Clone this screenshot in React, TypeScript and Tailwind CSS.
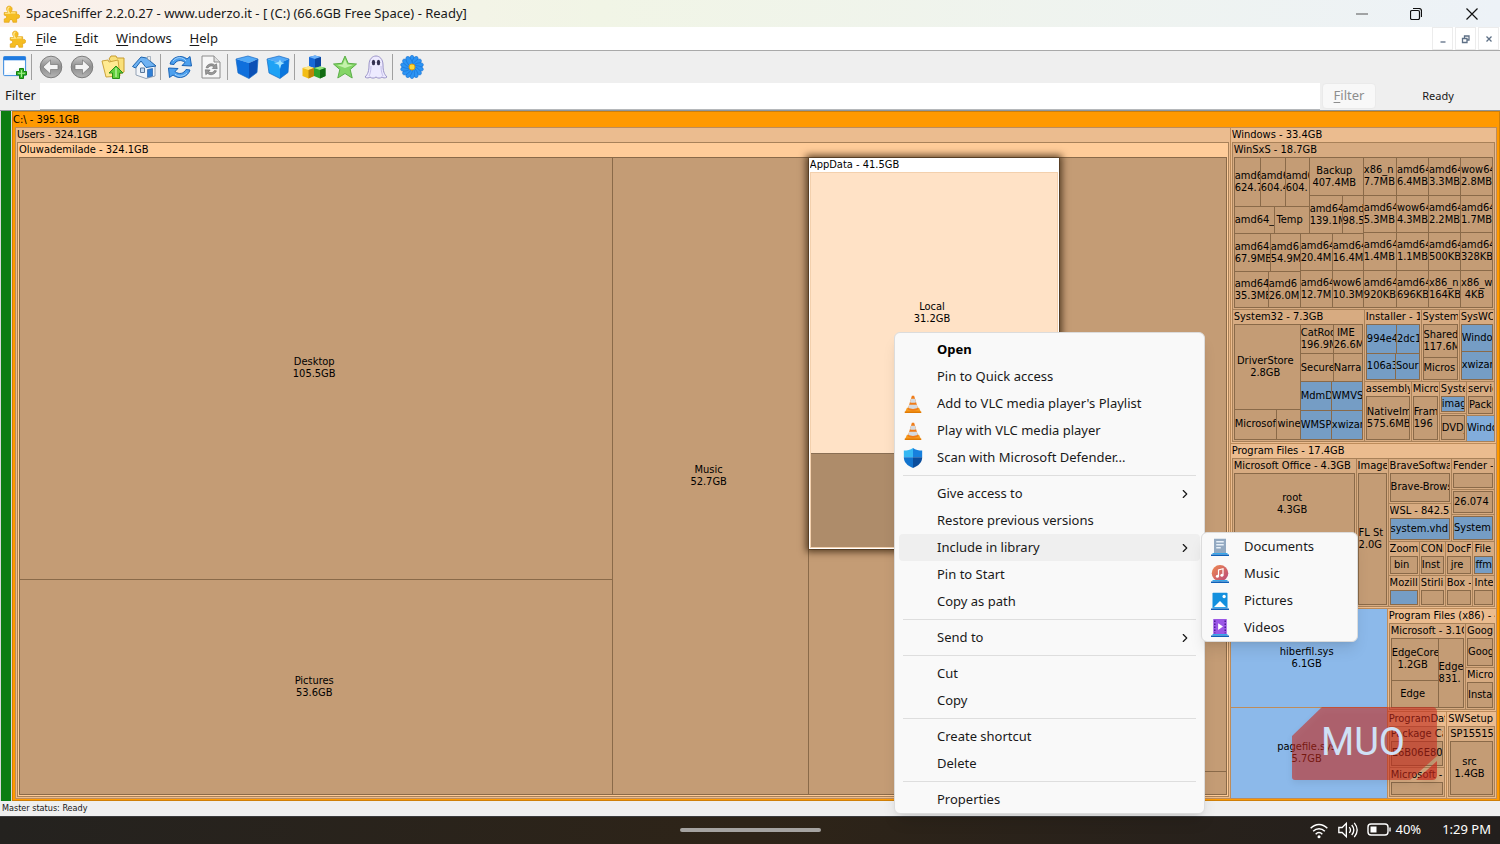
import type { ReactNode } from 'react'
import clsx from 'clsx'
import { ChevronRight } from 'lucide-react'

type Tone = 'file' | 'blue1' | 'blue2' | 'blue3' | 'local' | 'shade'
type Fill = 'root' | 'folder1' | 'folder2' | 'open' | 'hover'

type Node =
  | { kind: 'leaf'; w: number; name?: string; size?: string; tone: Tone }
  | { kind: 'split'; w: number; dir: 'row' | 'col'; items: Node[] }
  | { kind: 'group'; w: number; title: string; fill: Fill; body: Node }

const tones: Record<Tone, string> = {
  file: 'bg-[#c49c75]',
  blue1: 'bg-[#8cb9ea]',
  blue2: 'bg-[#82addb]',
  blue3: 'bg-[#759dc5]',
  local: 'bg-[#ffe2c6]',
  shade: 'bg-[#ae8c6a]',
}

const fills: Record<Fill, string> = {
  root: 'bg-[#ff9900]',
  folder1: 'bg-[#ebbc8f]',
  folder2: 'bg-[#d7ab81]',
  open: 'bg-[#ffcc99]',
  hover: 'bg-white z-10 shadow-[0_0_7px_3px_rgba(50,30,10,0.75)]',
}

const lines: Record<Fill, string> = {
  root: 'border-[#bd8c5b] bg-[#bd8c5b]',
  folder1: 'border-[#a88159] bg-[#a88159]',
  folder2: 'border-[#8a6a49] bg-[#8a6a49]',
  open: 'border-[#8a6a49] bg-[#8a6a49]',
  hover: 'border-[#f3d0ad] bg-[#8a6f54]',
}

const leaf = (w: number, name?: string, size?: string, tone: Tone = 'file'): Node => ({ kind: 'leaf', w, name, size, tone })
const blue = (w: number, name?: string): Node => leaf(w, name, undefined, 'blue3')
const row = (w: number, ...items: Node[]): Node => ({ kind: 'split', w, dir: 'row', items })
const col = (w: number, ...items: Node[]): Node => ({ kind: 'split', w, dir: 'col', items })
const group = (w: number, title: string, body: Node, fill: Fill = 'folder2'): Node => ({ kind: 'group', w, title, fill, body })

const users = group(
  1215,
  'Users - 324.1GB',
  group(
    1,
    'Oluwademilade - 324.1GB',
    row(
      1,
      col(594, leaf(422, 'Desktop', '105.5GB'), leaf(215, 'Pictures', '53.6GB')),
      leaf(195, 'Music', '52.7GB'),
      col(
        251,
        group(392, 'AppData - 41.5GB', col(1, leaf(281, 'Local', '31.2GB', 'local'), leaf(94, '', '', 'shade')), 'hover'),
        leaf(245),
      ),
      col(166, leaf(615), leaf(22)),
    ),
    'open',
  ),
  'folder1',
)

const winSxS = group(
  167,
  'WinSxS - 18.7GB',
  row(
    1,
    col(
      129,
      row(
        76,
        col(
          75,
          row(49, leaf(26, 'amd6', '624.7'), leaf(25, 'amd6', '604.4'), leaf(24, 'amd6', '604.')),
          row(27, leaf(40, 'amd64_'), leaf(35, 'Temp')),
        ),
        col(54, leaf(38, 'Backup', '407.4MB'), row(38, leaf(33, 'amd64', '139.1M'), leaf(21, 'amd', '98.5'))),
      ),
      row(
        74,
        col(
          66,
          row(38, leaf(36, 'amd64', '67.9MB'), leaf(30, 'amd6', '54.9M')),
          row(36, leaf(34, 'amd64', '35.3MB'), leaf(32, 'amd6', '26.0M')),
        ),
        col(
          63,
          row(37, leaf(32, 'amd64', '20.4M'), leaf(31, 'amd64', '16.4M')),
          row(37, leaf(32, 'amd64', '12.7M'), leaf(31, 'wow6', '10.3M')),
        ),
      ),
    ),
    col(
      129,
      row(1, leaf(33, 'x86_n', '7.7MB'), leaf(32, 'amd64', '6.4MB'), leaf(32, 'amd64', '3.3MB'), leaf(32, 'wow64', '2.8MB')),
      row(1, leaf(33, 'amd64', '5.3MB'), leaf(32, 'wow64', '4.3MB'), leaf(32, 'amd64', '2.2MB'), leaf(32, 'amd64', '1.7MB')),
      row(1, leaf(33, 'amd64', '1.4MB'), leaf(32, 'amd64', '1.1MB'), leaf(32, 'amd64', '500KB'), leaf(32, 'amd64', '328KB')),
      row(1, leaf(33, 'amd64', '920KB'), leaf(32, 'amd64', '696KB'), leaf(32, 'x86_n', '164KB'), leaf(32, 'x86_w', '4KB')),
    ),
  ),
)

const system32 = group(
  131,
  'System32 - 7.3GB',
  row(
    1,
    col(66, leaf(85, 'DriverStore', '2.8GB'), row(29, leaf(43, 'Microsof'), leaf(23, 'wine'))),
    col(
      62,
      row(29, leaf(33, 'CatRoo', '196.9M'), leaf(29, 'IME', '26.6M')),
      row(28, leaf(33, 'Secure'), leaf(29, 'Narra')),
      row(28, blue(31, 'MdmD'), blue(31, 'WMVS')),
      row(29, blue(31, 'WMSP'), blue(31, 'xwizar')),
    ),
  ),
)

const windows = group(
  316,
  'Windows - 33.4GB',
  col(
    1,
    winSxS,
    row(
      132,
      system32,
      col(
        131,
        row(
          72,
          group(58, 'Installer - 1.', col(1, row(28, blue(31, '994e4'), blue(23, '2dc1')), row(25, blue(30, '106a3'), blue(24, 'Sour')))),
          group(38, 'System', col(1, leaf(32, 'Shared', '117.6M'), leaf(21, 'Micros'))),
          group(35, 'SysWO', col(1, blue(26, 'Windo'), blue(27, 'xwizar'))),
        ),
        row(
          60,
          group(47, 'assembly', leaf(1, 'NativeIm', '575.6MB')),
          group(27, 'Micro', leaf(1, 'Fram', '196')),
          col(28, group(33, 'Syste', blue(1, 'imag')), group(26, '', leaf(1, 'DVD_'))),
          col(29, group(33, 'servic', leaf(1, 'Pack')), leaf(26, 'Windo', undefined, 'blue2')),
        ),
      ),
    ),
  ),
  'folder1',
)

const programFiles = group(
  165,
  'Program Files - 17.4GB',
  row(
    1,
    group(125, 'Microsoft Office - 4.3GB', col(1, leaf(60, 'root', '4.3GB'), leaf(70))),
    group(30, 'Image', leaf(1, 'FL St', '2.0G')),
    col(
      109,
      row(
        83,
        col(64, group(45, 'BraveSoftwar', leaf(1, 'Brave-Brows')), group(38, 'WSL - 842.5M', blue(1, 'system.vhd'))),
        col(43, group(32, 'Fender -', leaf(1)), group(25, '', leaf(1, '26.074')), group(26, '', blue(1, 'System'))),
      ),
      row(
        33,
        group(32, 'Zoom', leaf(1, 'bin')),
        group(26, 'CONE', leaf(1, 'Inst')),
        group(28, 'DocF', leaf(1, 'jre')),
        group(21, 'File C', blue(1, 'ffm')),
      ),
      row(
        31,
        group(32, 'Mozilla', blue(1)),
        group(26, 'Stirlin', leaf(1)),
        group(28, 'Box -', leaf(1)),
        group(21, 'Inte', leaf(1)),
      ),
    ),
  ),
  'folder1',
)

const programFilesX86 = group(
  102,
  'Program Files (x86) - 4',
  row(
    1,
    group(76, 'Microsoft - 3.1G', row(1, col(47, leaf(40, 'EdgeCore', '1.2GB'), leaf(26, 'Edge')), leaf(25, 'Edge', '831.'))),
    col(29, group(43, 'Googl', leaf(1, 'Goog')), group(40, 'Micros', leaf(1, 'Insta'))),
  ),
  'folder1',
)

const programData = group(
  59,
  'ProgramDat',
  col(1, group(42, 'Package Ca', leaf(1, 'E6B06E80')), group(29, 'Microsoft -', leaf(1))),
  'folder1',
)

const tree = row(
  1,
  users,
  col(
    266,
    windows,
    programFiles,
    row(
      190,
      col(157, leaf(99, 'hiberfil.sys', '6.1GB', 'blue1'), leaf(91, 'pagefile.sys', '5.7GB', 'blue1')),
      col(
        109,
        programFilesX86,
        row(88, programData, group(49, 'SWSetup', group(1, 'SP15515', leaf(1, 'src', '1.4GB')), 'folder1')),
      ),
    ),
  ),
)

function TreeNode({ node }: { node: Node }) {
  const style = { flexGrow: node.w }

  if (node.kind === 'leaf') {
    return (
      <div
        style={style}
        className={clsx('flex min-h-0 min-w-0 basis-0 flex-col justify-center items-center-safe overflow-hidden whitespace-nowrap', tones[node.tone])}
      >
        {node.name && <span className="pr-1">{node.name}</span>}
        {node.size && <span className="pr-1">{node.size}</span>}
      </div>
    )
  }

  if (node.kind === 'split') {
    return (
      <div style={style} className={clsx('flex min-h-0 min-w-0 basis-0 gap-px', node.dir === 'col' && 'flex-col')}>
        {node.items.map((item, i) => (
          <TreeNode key={i} node={item} />
        ))}
      </div>
    )
  }

  return (
    <div style={style} className={clsx('flex min-h-0 min-w-0 basis-0 flex-col px-px pb-px', fills[node.fill], !node.title && 'pt-px')}>
      {node.title && <div className="h-[14px] shrink-0 overflow-hidden whitespace-nowrap leading-[14px]">{node.title}</div>}
      <div className={clsx('flex min-h-0 flex-1 border', lines[node.fill])}>
        <TreeNode node={node.body} />
      </div>
    </div>
  )
}

function Svg({ children, className = 'size-6' }: { children: ReactNode; className?: string }) {
  return (
    <svg viewBox="0 0 24 24" className={className} fill="none" aria-hidden="true">
      {children}
    </svg>
  )
}

const Puzzle = () => (
  <Svg className="size-[18px]">
    <path
      d="M3 10h5.500C5.500 7 5 1.500 9.500 1.500S14.500 6.500 12 9h7.500v4c1.500-1 4-.5 4 2s-2 3.500-4 2.500V23h-5c0-2.500-1-3.500-2.500-3.500S9.500 20.500 9.500 23H3v-4.500c2 0 3-1 3-2.500s-1-2.500-3-2.500z"
      fill="#f5bd22"
      stroke="#e3a416"
    />
    <path d="M4 11h6c-3-3-3-8 0-8M12 10.500h6" stroke="#ffe995" strokeWidth="1.600" />
  </Svg>
)

const NewView = () => (
  <Svg>
    <rect x="0.600" y="1.600" width="22" height="19" rx="1" fill="#f2f8ff" stroke="#3f8fe0" />
    <path d="M0.600 1.600h22v3.600h-22z" fill="#1f7ae0" />
    <path d="M2 6h19.500v5L2 19z" fill="#fff" />
    <path d="M16.500 13.500h4v3h3v3.500h-3v3.500h-4V20h-3v-3.500h3z" fill="#35b52a" stroke="#15800f" />
    <path d="M18.500 15v7M15 18.300h7" stroke="#a5ee8c" />
  </Svg>
)

const Arrow = ({ flip }: { flip?: boolean }) => (
  <Svg className={clsx('size-6', flip && '-scale-x-100')}>
    <defs>
      <linearGradient id="nav" x1="0" y1="0" x2="0" y2="1">
        <stop stopColor="#c9c9c9" />
        <stop offset=".5" stopColor="#8e8e8e" />
        <stop offset="1" stopColor="#b5b5b5" />
      </linearGradient>
    </defs>
    <circle cx="12" cy="12" r="10.800" fill="url(#nav)" stroke="#7d7d7d" />
    <path d="M4 12l7.500-7v4.500H19v5h-7.500V19z" fill="#f4f4f4" stroke="#777" strokeWidth=".7" />
  </Svg>
)

const FolderUp = () => (
  <Svg>
    <path d="M8 4l2-3h5l1 2h7v14l-5 2z" fill="#f9e07a" stroke="#c69b2e" />
    <path d="M1 6l6-1 1 2 9-2 2 16-14 1z" fill="#ffea92" stroke="#cba33b" />
    <path d="M15 11l7 7h-3.500v5.500h-7V18H8z" fill="#62cf3c" stroke="#2c8d1c" />
    <path d="M15 13v9" stroke="#b5f09a" strokeWidth="1.500" />
  </Svg>
)

const Home = () => (
  <Svg>
    <path d="M4 11l6-6 13 5v11l-9 2.500L4 20z" fill="#f2f5f9" stroke="#93a2b5" />
    <path d="M.500 11.500L9 2l5.500 1L24 11l-10 1.500L9 6l-5.500 7z" fill="#6fb2f2" stroke="#1d64ad" />
    <path d="M15.500 14.500l5-1V21l-5 1.300z" fill="#2f7fd6" stroke="#1a58a3" strokeWidth=".6" />
    <path d="M8.500 13h4v4.500h-4z" fill="#c7dcf2" stroke="#59779a" />
    <path d="M15.500 1.500h3V6l-3-2z" fill="#e5ebf2" stroke="#7c8ea3" strokeWidth=".6" />
  </Svg>
)

const RefreshShape = ({ fill, stroke }: { fill: string; stroke: string }) => (
  <g fill={fill} stroke={stroke}>
    <path d="M2 9C4 2 13-1 19 4l3-2.500L23.500 11l-9.500-.5L17 7.500C13 4 8 5.500 6 9.500z" />
    <path d="M22 15c-2 7-11 10-17 5l-3.500 2.500L.500 13l9.500.5L7 16.500c4 3.500 9 2 11-2z" />
  </g>
)

const Refresh = () => (
  <Svg>
    <RefreshShape fill="#4da0ee" stroke="#1862b5" />
    <path d="M5 6c4-5 10-4 13 0M19 18c-4 4-9 4-12 1" stroke="#a9d6fb" />
  </Svg>
)

const RefreshPage = () => (
  <Svg>
    <path d="M3 1h12l6 6v16H3z" fill="#f7f7f7" stroke="#8c8c8c" />
    <path d="M15 1v6h6" fill="#ddd" stroke="#8c8c8c" />
    <g transform="translate(6 8) scale(.52)">
      <RefreshShape fill="#999" stroke="#5c5c5c" />
    </g>
  </Svg>
)

const Cube = ({ lit }: { lit?: boolean }) => (
  <Svg>
    <path d="M1 4l12-3 10 3-9 4z" fill="#52aaf8" />
    <path d="M1 4l13 4v15.500L3 18z" fill={lit ? '#1fa2f5' : '#0f6fdc'} />
    <path d="M23 4l-9 4v15.500l8-6z" fill={lit ? '#0a76dd' : '#0b50b6'} />
    {lit && <path d="M14 4.500l1.200 2.500 3.300 1-3.300 1.700L14 14l-1.400-4.300L8 8l4.500-1z" fill="#9fe2ff" />}
    <path d="M1 4l12-3 10 3-1 13.500-8 6L3 18z" stroke="#1569c4" strokeWidth=".7" />
  </Svg>
)

const Blocks = () => (
  <Svg>
    <path d="M7 2l6-1.500L19 2v9l-6 2.500L7 11z" fill="#1769d6" />
    <path d="M7 2l6-1.500L19 2l-6 2z" fill="#70b4fa" />
    <path d="M13 4l6-2v9l-6 2.500z" fill="#0b459f" />
    <path d="M.500 13l6-1.500L12 13v8l-5.500 2.500L.500 21z" fill="#f3bd16" />
    <path d="M.500 13l6-1.500L12 13l-5.500 2z" fill="#ffe883" />
    <path d="M6.500 15l5.500-2v8l-5.500 2.500z" fill="#bd8508" />
    <path d="M12 13l6-1.500 5.500 1.500v8L18 23.500 12 21z" fill="#2fa22a" />
    <path d="M12 13l6-1.500 5.500 1.500L18 15z" fill="#97e582" />
    <path d="M18 15l5.500-2v8L18 23.500z" fill="#126b13" />
  </Svg>
)

const Star = () => (
  <Svg>
    <path d="M12 1l3.200 7.300 8.300.7-6.300 5.500 2 8.500L12 18.500 4.800 23l2-8.500L.500 9l8.300-.7z" fill="#84d566" stroke="#5caf49" />
    <path d="M12 4l2.300 5.500 5.700.5-8 3-8-3 5.700-.5z" fill="#c4f2ab" />
  </Svg>
)

const Ghost = () => (
  <Svg>
    <path d="M5 10c0-12 14-12 14 0 0 6 1 9 4 12-2 1.500-4 1-5 0-2 1.500-4 1.500-6 0-2 1.500-4 1.500-6 0-1 1-3 1.500-5 0 3-3 4-6 4-12z" fill="#edeaff" stroke="#9a93c8" />
    <path d="M7 11c0 5-1 8-2 10M17 11c0 5 1 8 2 10" stroke="#c5bfe8" />
    <ellipse cx="9.500" cy="7.500" rx="1.700" ry="2.700" fill="#363352" />
    <ellipse cx="14.500" cy="7.500" rx="1.700" ry="2.700" fill="#363352" />
  </Svg>
)

const Flower = () => (
  <Svg>
    {Array.from({ length: 14 }, (_, i) => (
      <ellipse key={i} cx="12" cy="5.500" rx="2.500" ry="5.200" fill="#2c94f4" stroke="#0d62c3" strokeWidth=".4" transform={`rotate(${(i * 360) / 14} 12 12)`} />
    ))}
    <circle cx="12" cy="12" r="3" fill="#fbd83a" stroke="#d99a12" />
  </Svg>
)

const Cone = () => (
  <Svg className="size-[18px]">
    <path d="M4 17h16l3 6.500H1z" fill="#f79a1c" />
    <path d="M10.500 1h3L19 19c-3 2.500-11 2.500-14 0z" fill="#f07c18" />
    <path d="M9.300 5h5.400l1.400 4.500c-2 1.200-6.200 1.200-8.200 0zM7 13h10l1.200 4c-3 2-9.400 2-12.400 0z" fill="#d5dae0" />
    <path d="M1 23h22" stroke="#e07a05" strokeWidth="2" />
  </Svg>
)

const Shield = () => (
  <Svg className="size-5">
    <path d="M12 0c3 2.500 7 3 11 3v8H12z" fill="#1780dd" />
    <path d="M12 0C9 2.500 5 3 1 3v8h11z" fill="#35b8f3" />
    <path d="M1 11h11v13C5 21 1 17 1 11z" fill="#1274ce" />
    <path d="M23 11H12v13c7-3 11-7 11-13z" fill="#0b4d9c" />
  </Svg>
)

const Stand = () => (
  <>
    <path d="M2 21h20" stroke="#36a7ea" strokeWidth="2" />
    <path d="M0 23h24" stroke="#0f60b8" strokeWidth="2" />
  </>
)

const DocLib = () => (
  <Svg className="size-[18px]">
    <path d="M4 1h16v19H4z" fill="#93a9c1" />
    <path d="M7 5h10M7 9h10M7 13h6" stroke="#e8f0f8" strokeWidth="2" />
    <Stand />
  </Svg>
)

const MusicLib = () => (
  <Svg className="size-[18px]">
    <defs>
      <linearGradient id="disc" x1="0" y1="0" x2="1" y2="1">
        <stop stopColor="#f08a4e" />
        <stop offset="1" stopColor="#b8487e" />
      </linearGradient>
    </defs>
    <circle cx="12" cy="11" r="11" fill="url(#disc)" />
    <path d="M10 15V6.500l6-1.500v8.500" stroke="#fff" strokeWidth="1.600" />
    <circle cx="8.500" cy="15" r="2" fill="#fff" />
    <circle cx="14.500" cy="13.500" r="2" fill="#fff" />
    <Stand />
  </Svg>
)

const PicLib = () => (
  <Svg className="size-[18px]">
    <rect x="2" y="1" width="20" height="20" rx="1" fill="#1390de" />
    <path d="M3 21l9-9 9 9z" fill="#fff" />
    <circle cx="17.500" cy="6" r="2.200" fill="#fff" />
    <Stand />
  </Svg>
)

const VideoLib = () => (
  <Svg className="size-[18px]">
    <path d="M3 0h18v20H3z" fill="#9b57e6" />
    <path d="M5 2v17M19 2v17" stroke="#4c1d95" strokeWidth="2" strokeDasharray="2 2" />
    <path d="M9.500 5.500l6.500 4.500-6.500 4.500z" fill="#fff" />
    <Stand />
  </Svg>
)

const toolGroups: { label: string; icon: ReactNode }[][] = [
  [{ label: 'New view', icon: <NewView /> }],
  [
    { label: 'Back', icon: <Arrow /> },
    { label: 'Forward', icon: <Arrow flip /> },
    { label: 'Parent folder', icon: <FolderUp /> },
    { label: 'Home', icon: <Home /> },
  ],
  [
    { label: 'Rescan', icon: <Refresh /> },
    { label: 'Rescan file', icon: <RefreshPage /> },
  ],
  [
    { label: 'Less detail', icon: <Cube /> },
    { label: 'More detail', icon: <Cube lit /> },
  ],
  [
    { label: 'File classes', icon: <Blocks /> },
    { label: 'Tagging', icon: <Star /> },
    { label: 'Ghost files', icon: <Ghost /> },
  ],
  [{ label: 'Configure', icon: <Flower /> }],
]

interface MenuItem {
  label: string
  icon?: ReactNode
  sub?: boolean
  bold?: boolean
  active?: boolean
}

const menuSections: MenuItem[][] = [
  [
    { label: 'Open', bold: true },
    { label: 'Pin to Quick access' },
    { label: "Add to VLC media player's Playlist", icon: <Cone /> },
    { label: 'Play with VLC media player', icon: <Cone /> },
    { label: 'Scan with Microsoft Defender...', icon: <Shield /> },
  ],
  [
    { label: 'Give access to', sub: true },
    { label: 'Restore previous versions' },
    { label: 'Include in library', sub: true, active: true },
    { label: 'Pin to Start' },
    { label: 'Copy as path' },
  ],
  [{ label: 'Send to', sub: true }],
  [{ label: 'Cut' }, { label: 'Copy' }],
  [{ label: 'Create shortcut' }, { label: 'Delete' }],
  [{ label: 'Properties' }],
]

const libraries: MenuItem[] = [
  { label: 'Documents', icon: <DocLib /> },
  { label: 'Music', icon: <MusicLib /> },
  { label: 'Pictures', icon: <PicLib /> },
  { label: 'Videos', icon: <VideoLib /> },
]

function MenuRow({ item }: { item: MenuItem }) {
  return (
    <button
      role="menuitem"
      className={clsx('flex h-[27px] w-full items-center rounded pr-2 text-left', item.active && 'bg-[#efefef]', item.bold && 'font-bold text-black')}
    >
      <span className="flex w-[38px] shrink-0 justify-center pr-[10px]">{item.icon}</span>
      <span className="flex-1 whitespace-nowrap">{item.label}</span>
      {item.sub && <ChevronRight className="size-[14px]" strokeWidth={2} />}
    </button>
  )
}

function ContextMenu() {
  return (
    <div role="menu" className="absolute top-[332px] left-[894px] z-20 w-[311px] rounded-md border border-[#dcdcdc] bg-[#f9f9f9] px-1 pt-[3px] shadow-lg">
      {menuSections.map((section, i) => (
        <div key={i}>
          {i > 0 && (
            <div className="mx-1 flex h-[9px] items-center">
              <hr className="w-full border-[#dedede]" />
            </div>
          )}
          {section.map((item) => (
            <MenuRow key={item.label} item={item} />
          ))}
        </div>
      ))}
    </div>
  )
}

function LibraryMenu() {
  return (
    <div role="menu" className="absolute top-[532px] left-[1201px] z-30 w-[157px] rounded-md border border-[#dcdcdc] bg-[#f9f9f9] px-1 shadow-lg">
      {libraries.map((item) => (
        <MenuRow key={item.label} item={item} />
      ))}
    </div>
  )
}

function TitleBar() {
  return (
    <header className="flex h-[27px] shrink-0 items-center bg-linear-to-r from-[#fbf0eb] via-[#f1f5e6] via-40% to-[#edf2f7] pl-[2px]">
      <Puzzle />
      <h1 className="ml-[6px] flex-1 whitespace-nowrap">SpaceSniffer 2.2.0.27 - www.uderzo.it - [ (C:) (66.6GB Free Space) - Ready]</h1>
      <button aria-label="Minimize" className="flex h-full w-[54px] items-center justify-center">
        <Svg className="size-3">
          <path d="M0 12h24" stroke="#555" strokeWidth="2" />
        </Svg>
      </button>
      <button aria-label="Restore" className="flex h-full w-[54px] items-center justify-center">
        <Svg className="size-3">
          <rect x="1" y="5" width="18" height="18" rx="3" stroke="#111" strokeWidth="2.400" />
          <path d="M6 1h12q5 0 5 5v12" stroke="#111" strokeWidth="2.400" />
        </Svg>
      </button>
      <button aria-label="Close" className="flex h-full w-[57px] items-center justify-center">
        <Svg className="size-3">
          <path d="M1 1l22 22M23 1L1 23" stroke="#111" strokeWidth="2.400" />
        </Svg>
      </button>
    </header>
  )
}

function MenuBar() {
  return (
    <nav className="flex h-[24px] shrink-0 items-center border-b border-[#a9a9a9] bg-white pl-2">
      <Puzzle />
      <div className="ml-px flex flex-1">
        {['File', 'Edit', 'Windows', 'Help'].map((name) => (
          <button key={name} className="px-[9px]">
            <u className="underline-offset-2">{name[0]}</u>
            {name.slice(1)}
          </button>
        ))}
      </div>
      <div className="flex h-full gap-[2px] pr-px">
        {[
          { label: 'Minimize view', d: 'M7 18h10' },
          { label: 'Restore view', d: 'M5 11h9v8H5zM9 11V6h9v8h-4' },
          { label: 'Close view', d: 'M7 7l10 10M17 7L7 17' },
        ].map((b) => (
          <button key={b.label} aria-label={b.label} className="flex w-[21px] items-center justify-center border border-[#ececec]">
            <Svg className="size-3">
              <path d={b.d} stroke="#5d6f85" strokeWidth="2.600" />
            </Svg>
          </button>
        ))}
      </div>
    </nav>
  )
}

function ToolBar() {
  return (
    <div role="toolbar" className="flex h-[31px] shrink-0 items-center bg-[#efefef]">
      {toolGroups.map((tools, i) => (
        <div key={i} className="flex items-center">
          {i > 0 && <div className="mr-[3px] ml-px h-[26px] w-px bg-[#a0a0a0]" />}
          {tools.map((tool) => (
            <button key={tool.label} aria-label={tool.label} className={clsx('flex justify-center', i === 0 ? 'w-[30px]' : 'w-[31px]')}>
              {tool.icon}
            </button>
          ))}
        </div>
      ))}
    </div>
  )
}

function FilterBar() {
  return (
    <div className="flex h-[29px] shrink-0 items-center border-b border-[#8e959c] bg-[#efefef]">
      <label htmlFor="filter" className="w-[40px] pl-[5px]">
        Filter
      </label>
      <input id="filter" className="h-[27px] flex-1 border-b border-[#b5b8bb] bg-white px-1 outline-none" />
      <button className="ml-[2px] h-[26px] w-[54px] rounded-sm border border-[#eaeaea] bg-[#f8f8f8] text-[#8d8d8d]">
        <u className="underline-offset-2">F</u>ilter
      </button>
      <span className="w-[124px] text-center text-[11px]">Ready</span>
    </div>
  )
}

function Watermark() {
  return (
    <div className="absolute right-[62px] bottom-[21px] z-10 h-[73px] w-[146px]">
      <svg viewBox="0 0 146 73" className="absolute inset-0 drop-shadow-md" aria-hidden="true">
        <path d="M30 0h110q5 0 5 5v44L118 73H3q-3 0-3-3V29z" fill="#c92a1c" fillOpacity=".58" />
        <path d="M145 54v14q0 5-5 5h-16z" fill="#c92a1c" fillOpacity=".7" />
      </svg>
      <span className="absolute top-[14px] left-[29px] font-[Roboto] text-[38px] leading-[42px] text-[#cfe0f5]">MUO</span>
    </div>
  )
}

function TaskBar() {
  return (
    <footer className="relative z-20 grid h-[28px] shrink-0 grid-cols-3 items-center border-t border-[#3a3a3c] bg-linear-to-r from-[#24221f] via-[#2e2418] to-[#231f1d] px-[9px] pb-px text-white">
      <span />
      <span className="h-1 w-[141px] justify-self-center rounded-full bg-[#a5a3a1]" />
      <div className="flex items-center justify-self-end">
        <Svg className="mr-[9px] size-5">
          <path d="M2 10c6-6 14-6 20 0M5 13.500c4-4 10-4 14 0M8 17c2.500-2.500 5.500-2.500 8 0" stroke="#fff" strokeWidth="1.800" />
          <circle cx="12" cy="20" r="1.800" fill="#fff" />
        </Svg>
        <Svg className="mr-[9px] size-5">
          <path d="M1 9h4l5-5v16l-5-5H1zM13.500 8.500q3 3.500 0 7M16.500 6q5 6 0 12M19.500 3.500q7 8.500 0 17" stroke="#fff" strokeWidth="1.600" />
        </Svg>
        <svg viewBox="0 0 24 14" className="mr-1 h-[14px] w-6" fill="none" aria-hidden="true">
          <rect x="1" y="1" width="20" height="11" rx="3" stroke="#fff" strokeWidth="1.400" />
          <rect x="3.500" y="3.500" width="6" height="6" fill="#fff" />
          <path d="M23 4.500v4" stroke="#fff" strokeWidth="1.400" />
        </svg>
        <span>40%</span>
        <span className="ml-[21px]">1:29 PM</span>
      </div>
    </footer>
  )
}

export default function App() {
  return (
    <div className="relative flex h-screen flex-col overflow-hidden bg-[#efefef] font-['Noto_Sans',sans-serif] text-[13px] text-[#191919]">
      <TitleBar />
      <MenuBar />
      <ToolBar />
      <FilterBar />

      {/* Disk map */}
      <main className="relative flex min-h-0 flex-1 bg-[#d9d9d9] pl-px font-['DejaVu_Sans_Condensed','DejaVu_Sans',sans-serif] text-[11px] leading-[12px] text-black">
        <div className="mr-px w-[10px] bg-[#0b7d12]" />
        <div className="flex min-w-0 flex-1 flex-col border border-[#cf7f08] bg-[#ff9900]">
          <div className="h-[15px] leading-[15px]">C:\ - 395.1GB</div>
          <div className={clsx('mx-[2px] mb-px flex min-h-0 flex-1 border', lines.root)}>
            <TreeNode node={tree} />
          </div>
        </div>
        <Watermark />
      </main>

      <div className="h-[15px] shrink-0 pl-[2px] font-['DejaVu_Sans_Condensed','DejaVu_Sans',sans-serif] text-[9px] leading-[15px]">Master status: Ready</div>
      <TaskBar />

      <ContextMenu />
      <LibraryMenu />
    </div>
  )
}
